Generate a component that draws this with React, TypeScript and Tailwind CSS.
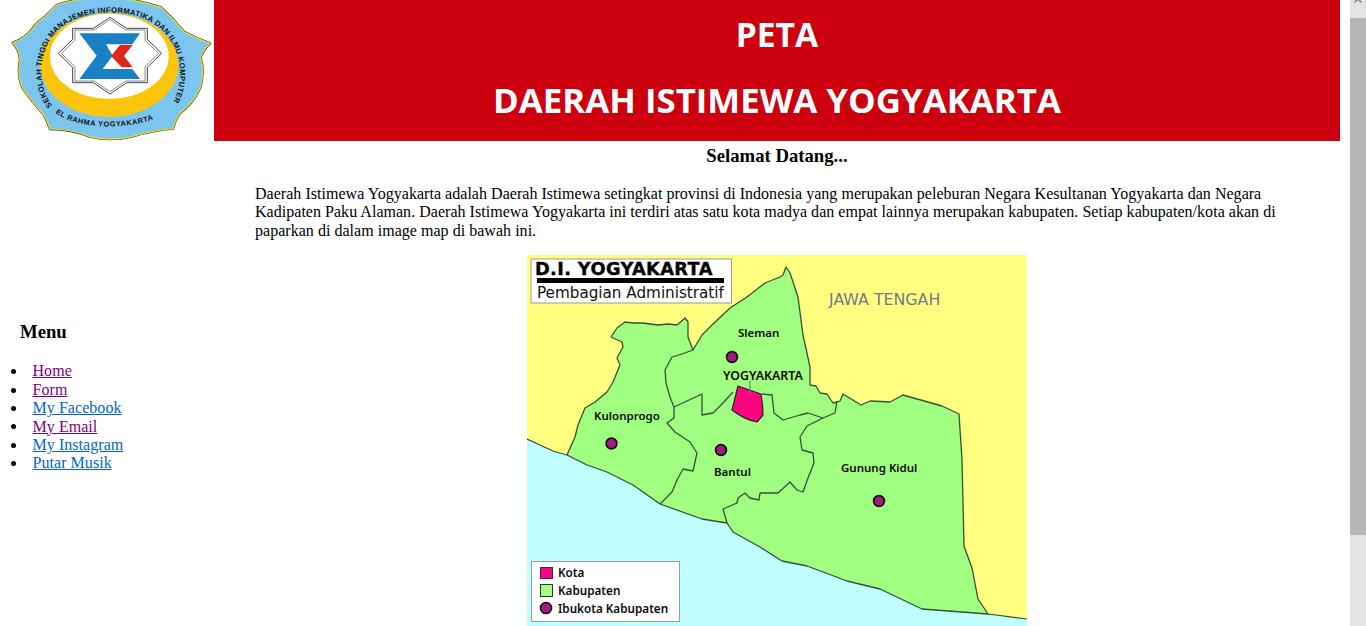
const links = [
  ["Home", "text-[#800080]"],
  ["Form", "text-[#800080]"],
  ["My Facebook", "text-[#0066cc]"],
  ["My Email", "text-[#800080]"],
  ["My Instagram", "text-[#0066cc]"],
  ["Putar Musik", "text-[#0066cc]"],
];

function Logo() {
  const outer =
    "M330 -8 Q270 -6 230 0 Q195 6 170 15 Q150 35 135 50 Q118 62 105 75 Q95 90 85 100 Q62 120 38 128 Q58 150 60 178 Q50 225 68 265 Q100 310 132 345 Q142 365 150 387 Q215 388 270 410 Q330 425 395 410 Q460 390 520 385 Q525 360 540 340 Q580 310 600 265 Q615 220 602 172 Q610 150 630 130 Q590 115 552 95 Q520 55 483 22 Q410 -2 330 -8 Z";
  const star =
    "330,52 380,85 442,85 442,118 485,160 442,202 442,248 380,248 330,282 280,248 218,248 218,202 175,160 218,118 218,85 280,85";
  return (
    <svg viewBox="0 0 642 423" className="w-[214px] h-[141px] block">
      <path d={outer} fill="#7cc5ee" stroke="#3a3a20" strokeWidth="7" strokeLinejoin="round" />
      <path d={outer} fill="#7cc5ee" stroke="#e6dc2c" strokeWidth="3.5" strokeLinejoin="round" />
      <ellipse cx="328" cy="195" rx="207" ry="156" fill="#fcc40a" />
      <ellipse cx="328" cy="169" rx="178" ry="128" fill="#ffffff" />
      <polygon points={star} fill="#fff" stroke="#444" strokeWidth="3" />
      <polygon points={star} fill="#fff" stroke="#666" strokeWidth="2.5" transform="translate(330 166) scale(0.94) translate(-330 -166)" />
      <polygon points="238,100 420,100 397,133 318,133 338,167 308,207 397,207 420,237 238,237 290,167" fill="#1b7fc4" />
      <polygon points="360,135 398,135 372,168 398,202 365,202 333,168" fill="#e0251b" />
      <defs>
        <path id="logoTop" d="M157 318 C90 230 115 38 330 38 C545 38 572 230 512 318" />
        <path id="logoBottom" d="M166 338 C230 392 420 396 506 334" />
      </defs>
      <text fontFamily="'Liberation Sans',sans-serif" fontWeight="700" fontSize="23" fill="#111" letterSpacing="0.8">
        <textPath href="#logoTop">SEKOLAH TINGGI MANAJEMEN INFORMATIKA DAN ILMU KOMPUTER</textPath>
      </text>
      <text fontFamily="'Liberation Sans',sans-serif" fontWeight="700" fontSize="22" fill="#111" letterSpacing="1.7">
        <textPath href="#logoBottom">EL RAHMA YOGYAKARTA</textPath>
      </text>
    </svg>
  );
}

function Dot({ x, y }: { x: number; y: number }) {
  return <circle cx={x} cy={y} r="5.4" fill="#a01c80" stroke="#111" strokeWidth="1.7" />;
}

function MapLabel({ x, y, children, size = 11.5 }: { x: number; y: number; children: string; size?: number }) {
  return (
    <text x={x} y={y} fontSize={size} fontWeight="600" fill="#0a0a0a" fontFamily="'Noto Sans',sans-serif">
      {children}
    </text>
  );
}

function YogyaMap() {
  const line = "#34503a";
  const land =
    "567,455 587,465 607,472 633,485 660,504 702,519 727,523 733,532 760,547 782,561 807,566 847,581 880,589 922,609 988,614 978,599 972,568 964,546 963,503 962,460 959,414 942,406 903,395 890,402 870,401 861,405 843,394 840,401 837,402 833,403 827,394 820,393 816,386 810,385 810,367 803,335 798,297 790,273 786,267 783,275 780,277 765,283 747,297 730,308 712,325 702,335 693,350 688,337 688,322 685,318 677,325 668,324 658,325 650,324 643,323 633,323 625,322 617,328 611,337 622,342 623,347 617,358 620,365 613,382 607,392 595,402 585,408 578,425 575,437";
  const sea =
    "527,439 553,451 567,455 587,465 607,472 633,485 660,504 702,519 727,523 733,532 760,547 782,561 807,566 847,581 880,589 922,609 988,614 1027,619 1027,626 527,626";
  const kulon =
    "693,350 682,354 672,357 665,370 666,383 670,397 674,407 674,418 667,423 675,432 690,442 697,453 693,471 683,469 677,480 672,492 660,504";
  const sleman = "674,407 702,394 702,415 713,413 723,403 733,392";
  const sleman2 = "762,394 772,395 774,413 783,420 800,415 808,413 823,418 835,413 837,401";
  const kidul =
    "823,418 807,426 800,437 802,450 813,453 814,463 808,478 803,492 797,490 790,482 778,493 760,493 759,500 750,498 745,493 738,498 737,503 723,509 727,523";
  return (
    <svg viewBox="527 255 500 371" className="block w-[500px] h-[371px] shrink-0">
      <rect x="527" y="255" width="500" height="371" fill="#ffff80" />
      <polygon points={sea} fill="#bfffff" />
      <polyline points="527,439 553,451 567,455" fill="none" stroke={line} strokeWidth="1.2" />
      <polygon points={land} fill="#a0ff80" stroke={line} strokeWidth="1.3" strokeLinejoin="round" />
      <polyline points="988,614 1027,619" fill="none" stroke={line} strokeWidth="1.2" />
      <polyline points={kulon} fill="none" stroke={line} strokeWidth="1.3" strokeLinejoin="round" />
      <polyline points={sleman} fill="none" stroke={line} strokeWidth="1.3" strokeLinejoin="round" />
      <polyline points={sleman2} fill="none" stroke={line} strokeWidth="1.3" strokeLinejoin="round" />
      <polyline points={kidul} fill="none" stroke={line} strokeWidth="1.3" strokeLinejoin="round" />
      <path d="M738 386 L761 394 Q763 405 763 415 L757 422 Q745 420 732 410 Z" fill="#ff0080" stroke="#222" strokeWidth="1.2" strokeLinejoin="round" />
      <line x1="750" y1="381" x2="750" y2="395" stroke="#777" strokeWidth="1.2" />

      <rect x="531" y="259" width="200.5" height="44" fill="#fff" stroke="#999" strokeWidth="1" />
      <text x="535" y="275" fontSize="17.8" fontWeight="700" fontFamily="'DejaVu Sans',sans-serif" fill="#000" stroke="#000" strokeWidth="0.35" letterSpacing="0.35">D.I. YOGYAKARTA</text>
      <rect x="537" y="278" width="187" height="5" fill="#000" />
      <text x="537" y="298" fontSize="15.2" fontFamily="'DejaVu Sans',sans-serif" fill="#111">Pembagian Administratif</text>
      <text x="829" y="305" fontSize="15.8" fontFamily="'DejaVu Sans',sans-serif" fill="#77778c">JAWA TENGAH</text>

      <MapLabel x={738} y={337}>Sleman</MapLabel>
      <MapLabel x={723} y={380} size={12.4}>YOGYAKARTA</MapLabel>
      <MapLabel x={594} y={420}>Kulonprogo</MapLabel>
      <MapLabel x={714} y={476}>Bantul</MapLabel>
      <MapLabel x={841} y={472}>Gunung Kidul</MapLabel>
      <Dot x={732} y={357} />
      <Dot x={611.5} y={443.5} />
      <Dot x={721} y={450} />
      <Dot x={879} y={501} />

      <rect x="531.5" y="561.5" width="148" height="60" fill="#fff" stroke="#999" strokeWidth="1" />
      <rect x="540.5" y="567.5" width="12" height="11" fill="#ff0080" stroke="#333" />
      <rect x="540.5" y="584.5" width="12" height="12" fill="#a0ff80" stroke="#333" />
      <circle cx="546" cy="608" r="5.6" fill="#a01c80" stroke="#111" strokeWidth="1.5" />
      <MapLabel x={558} y={576.5} size={11.7}>Kota</MapLabel>
      <MapLabel x={558} y={594.5} size={11.7}>Kabupaten</MapLabel>
      <MapLabel x={558} y={612.5} size={11.7}>Ibukota Kabupaten</MapLabel>
    </svg>
  );
}

export default function App() {
  return (
    <div className="flex h-[626px] w-[1366px] overflow-hidden bg-white font-['Liberation_Serif',serif] text-black">
      <div className="w-[1340px] shrink-0 flex flex-col">
        <div className="flex h-[141px] shrink-0">
          <div className="w-[214px] shrink-0">
            <Logo />
          </div>
          <div className="flex-1 bg-[#cc000e] flex flex-col items-center text-white font-['Open_Sans',sans-serif] font-bold">
            <div className="text-[33.6px] leading-[46px] mt-[11px]">PETA</div>
            <div className="text-[34.8px] leading-[47px] mt-[19px]">DAERAH ISTIMEWA YOGYAKARTA</div>
          </div>
        </div>
        <div className="flex flex-1">
          <div className="w-[214px] shrink-0 pt-[180px]">
            <h3 className="text-[18.72px] font-bold leading-[21px] ml-[20px]">Menu</h3>
            <ul className="pl-[11px] mt-[20.4px] text-[16px] leading-[18.4px] tracking-[0.05px]">
              {links.map(([t, c]) => (
                <li key={t} className="flex items-center gap-[16.5px]">
                  <span className="w-[5px] h-[5px] rounded-full bg-black shrink-0" />
                  <a className={`underline ${c}`} href="#">
                    {t}
                  </a>
                </li>
              ))}
            </ul>
          </div>
          <div className="flex-1 flex flex-col items-center">
            <h3 className="text-[18.72px] font-bold leading-[21px] mt-[4px]">Selamat Datang...</h3>
            <p className="text-[16px] leading-[18.4px] mt-[19px] pl-[41px] pr-[40px] w-full tracking-[0.03px]">
              Daerah Istimewa Yogyakarta adalah Daerah Istimewa setingkat provinsi di Indonesia yang merupakan peleburan Negara Kesultanan Yogyakarta dan Negara Kadipaten Paku Alaman. Daerah Istimewa Yogyakarta ini terdiri atas satu kota madya dan empat lainnya merupakan kabupaten. Setiap kabupaten/kota akan di paparkan di dalam image map di bawah ini.
            </p>
            <div className="mt-[15px]">
              <YogyaMap />
            </div>
          </div>
        </div>
      </div>
      <div className="w-[10px] shrink-0" />
      <div className="w-[16px] shrink-0 flex flex-col bg-[#e3e3e3]">
        <div className="h-[18px]">
          <svg viewBox="0 0 16 18" className="w-[16px] h-[18px] block">
            <path d="M4.5 2.5 L8 -1 L11.5 2.5" fill="none" stroke="#777" strokeWidth="1.4" />
          </svg>
        </div>
        <div className="h-[517px] bg-[#b5b5b5]" />
      </div>
    </div>
  );
}
